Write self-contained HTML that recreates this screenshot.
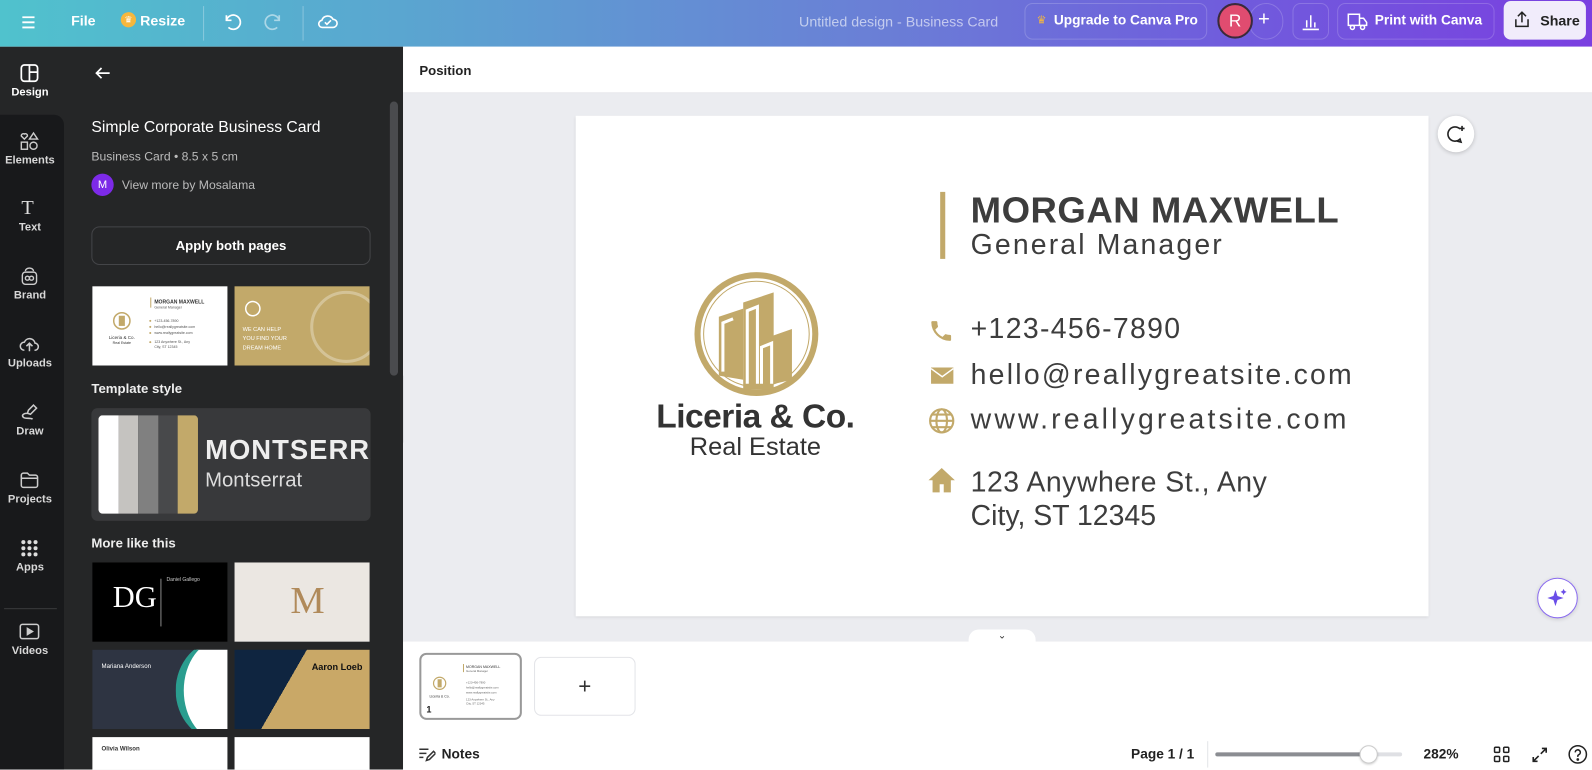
<!DOCTYPE html>
<html><head><meta charset="utf-8"><style>
*{box-sizing:border-box;margin:0;padding:0}
html,body{width:1592px;height:770px;overflow:hidden;background:#fff;font-family:"Liberation Sans",sans-serif}
#w{position:absolute;left:0;top:0;width:1568px;height:758px;transform:scale(1.01531);transform-origin:0 0;overflow:hidden}
.a{position:absolute}
.top{left:0;top:0;width:1568px;height:46px;background:linear-gradient(90deg,#50c2cd 0%,#5aa6d0 25%,#6a7fd6 55%,#6f5fdc 75%,#7a3fe0 100%)}
.tw{color:#fff;font-size:14px;font-weight:bold}
.rl{color:#d8d8d8;font-size:11px;width:63px;text-align:center;font-weight:bold}
.wt{color:#fff}
.ct{color:#3d3d3d;font-size:28px;letter-spacing:0.5px;white-space:nowrap}
.btn{border:1px solid rgba(255,255,255,.18);border-radius:8px}
</style></head><body><div id="w">
<div class="a top"></div>
<svg class="a" style="left:19px;top:13px" width="18" height="18" viewBox="0 0 18 18" stroke="#fff" stroke-width="1.8"><path d="M3 4h12M3 9h12M3 14h12"/></svg>
<div class="a tw" style="left:70px;top:12px">File</div>
<div class="a" style="left:119px;top:12px;width:15px;height:15px;border-radius:50%;background:#f6b73c;color:#fff;font-size:9px;text-align:center;line-height:15px">♛</div>
<div class="a tw" style="left:138px;top:12px">Resize</div>
<div class="a" style="left:200px;top:6px;width:1px;height:34px;background:rgba(255,255,255,.3)"></div>
<svg class="a" style="left:217px;top:10px" width="22" height="22" viewBox="0 0 22 22" fill="none" stroke="#fff" stroke-width="1.7"><path d="M6 5v5h5M6 10a7 7 0 1 1 2 7"/></svg>
<svg class="a" style="left:259px;top:10px" width="22" height="22" viewBox="0 0 22 22" fill="none" stroke="rgba(255,255,255,.5)" stroke-width="1.7"><path d="M16 5v5h-5M16 10a7 7 0 1 0-2 7"/></svg>
<div class="a" style="left:298px;top:6px;width:1px;height:34px;background:rgba(255,255,255,.3)"></div>
<svg class="a" style="left:311px;top:9px" width="24" height="24" viewBox="0 0 24 24" fill="none" stroke="#fff" stroke-width="1.6"><path d="M7 18h10a4 4 0 0 0 0-8 6 6 0 0 0-11 1 3.5 3.5 0 0 0 1 7z"/><path d="M9 13l2 2 4-4"/></svg>
<div class="a" style="left:787px;top:13px;color:rgba(255,255,255,.6);font-size:14px">Untitled design - Business Card</div>
<div class="a btn" style="left:1009px;top:3px;width:180px;height:36px"></div>
<div class="a" style="left:1021px;top:13px;color:#f6b73c;font-size:11px">♛</div>
<div class="a tw" style="left:1038px;top:12px;font-size:13.5px">Upgrade to Canva Pro</div>
<div class="a btn" style="left:1230px;top:3px;width:34px;height:36px;border-radius:18px"></div>
<div class="a" style="left:1199px;top:3px;width:35px;height:35px;border-radius:50%;background:#e04c70;border:2px solid #3a2a3a;color:#fff;font-size:17px;text-align:center;line-height:31px">R</div>
<div class="a wt" style="left:1239px;top:8px;font-size:20px">+</div>
<div class="a btn" style="left:1273px;top:3px;width:36px;height:36px"></div>
<svg class="a" style="left:1281px;top:11px" width="20" height="20" viewBox="0 0 20 20" stroke="#fff" stroke-width="1.5"><path d="M2 18h16M6 16V9M10 16V4M14 16V11"/></svg>
<div class="a btn" style="left:1317px;top:3px;width:155px;height:36px"></div>
<svg class="a" style="left:1326px;top:11px" width="22" height="20" viewBox="0 0 22 20" fill="none" stroke="#fff" stroke-width="1.5"><path d="M2 3h11v11H2zM13 7h4l3 4v3h-7"/><circle cx="6" cy="16" r="2"/><circle cx="16" cy="16" r="2"/></svg>
<div class="a tw" style="left:1354px;top:12px;font-size:13.5px">Print with Canva</div>
<div class="a" style="left:1481px;top:1px;width:81px;height:38px;background:#f1ecfb;border-radius:7px"></div>
<svg class="a" style="left:1489px;top:9px" width="20" height="20" viewBox="0 0 20 20" fill="none" stroke="#222" stroke-width="1.5"><path d="M10 13V3M6 7l4-4 4 4M4 10v7h12v-7"/></svg>
<div class="a" style="left:1517px;top:12px;font-size:14px;font-weight:bold;color:#222">Share</div>

<div class="a" style="left:0;top:46px;width:397px;height:712px;background:#252627"></div>
<div class="a" style="left:0;top:113px;width:63px;height:645px;background:#18191b;border-top-right-radius:10px"></div>
<svg class="a" style="left:19px;top:62px" width="20" height="20" viewBox="0 0 20 20" fill="none" stroke="#fff" stroke-width="1.7"><rect x="2" y="2" width="16" height="16" rx="3"/><path d="M10 2v16M10 9h8"/></svg>
<div class="a rl" style="left:-2px;top:85px;color:#fff">Design</div>
<svg class="a" style="left:19px;top:129px" width="20" height="20" viewBox="0 0 20 20" fill="none" stroke="#ccc" stroke-width="1.4"><path d="M5 8l-3-3a2 2 0 0 1 3-2 2 2 0 0 1 3 2zM14 2l4 6h-8z"/><rect x="2" y="11" width="6" height="7"/><circle cx="14" cy="14.5" r="3.5"/></svg>
<div class="a rl" style="left:-2px;top:152px">Elements</div>
<div class="a" style="left:21px;top:194px;color:#ddd;font-size:20px;font-family:'Liberation Serif',serif">T</div>
<div class="a rl" style="left:-2px;top:218px">Text</div>
<svg class="a" style="left:19px;top:262px" width="20" height="20" viewBox="0 0 20 20" fill="none" stroke="#ccc" stroke-width="1.4"><rect x="3" y="6" width="14" height="12" rx="3"/><circle cx="8" cy="12" r="2"/><circle cx="12" cy="12" r="2"/><path d="M6 5a4 3 0 0 1 8 0"/></svg>
<div class="a rl" style="left:-2px;top:285px">Brand</div>
<svg class="a" style="left:18px;top:329px" width="22" height="20" viewBox="0 0 22 20" fill="none" stroke="#ccc" stroke-width="1.5"><path d="M6 16a4 4 0 0 1 0-8 5.5 5.5 0 0 1 10.5 1A3.5 3.5 0 0 1 16 16M11 17V10M8 12l3-3 3 3"/></svg>
<div class="a rl" style="left:-2px;top:352px">Uploads</div>
<svg class="a" style="left:19px;top:396px" width="20" height="20" viewBox="0 0 20 20" fill="none" stroke="#ccc" stroke-width="1.5"><path d="M14 3l3 3-6 6-3-1 1-3zM8 11c-4 0-6 2-4 4s8 0 9 2"/></svg>
<div class="a rl" style="left:-2px;top:419px">Draw</div>
<svg class="a" style="left:19px;top:463px" width="20" height="20" viewBox="0 0 20 20" fill="none" stroke="#ccc" stroke-width="1.5"><path d="M2 5a2 2 0 0 1 2-2h4l2 2h6a2 2 0 0 1 2 2v8a2 2 0 0 1-2 2H4a2 2 0 0 1-2-2zM2 8h16"/></svg>
<div class="a rl" style="left:-2px;top:486px">Projects</div>
<svg class="a" style="left:20px;top:531px" width="18" height="18" viewBox="0 0 18 18" fill="#ddd"><circle cx="3" cy="3" r="2"/><circle cx="9" cy="3" r="2"/><circle cx="15" cy="3" r="2"/><circle cx="3" cy="9" r="2"/><circle cx="9" cy="9" r="2"/><circle cx="15" cy="9" r="2"/><circle cx="3" cy="15" r="2"/><circle cx="9" cy="15" r="2"/><circle cx="15" cy="15" r="2"/></svg>
<div class="a rl" style="left:-2px;top:553px">Apps</div>
<div class="a" style="left:4px;top:599px;width:52px;height:1px;background:#3a3b3d"></div>
<svg class="a" style="left:19px;top:613px" width="20" height="18" viewBox="0 0 20 18" fill="none" stroke="#ccc" stroke-width="1.5"><rect x="1" y="2" width="18" height="14" rx="2"/><path d="M8 6v6l5-3z" fill="#ccc"/></svg>
<div class="a rl" style="left:-2px;top:635px">Videos</div>

<svg class="a" style="left:92px;top:63px" width="18" height="18" viewBox="0 0 18 18" fill="none" stroke="#fff" stroke-width="1.7"><path d="M16 9H3M8 4L3 9l5 5"/></svg>
<div class="a" style="left:90px;top:117px;color:#fff;font-size:15.5px">Simple Corporate Business Card</div>
<div class="a" style="left:90px;top:147px;color:#bbb;font-size:12px">Business Card • 8.5 x 5 cm</div>
<div class="a" style="left:90px;top:171px;width:22px;height:22px;border-radius:50%;background:#7d2ae8;color:#fff;font-size:11px;text-align:center;line-height:22px">M</div>
<div class="a" style="left:120px;top:175px;color:#bbb;font-size:12px">View more by Mosalama</div>
<div class="a" style="left:90px;top:223px;width:275px;height:38px;border:1px solid #444548;border-radius:8px;color:#fff;font-size:13px;font-weight:bold;text-align:center;line-height:36px">Apply both pages</div>
<div class="a" style="left:384px;top:100px;width:8px;height:270px;background:#4a4b4e;border-radius:4px"></div>

<div class="a" style="left:91px;top:282px;width:133px;height:78px;background:#fff">
 <svg width="133" height="78" viewBox="0 0 133 78"><circle cx="29" cy="34" r="8" fill="none" stroke="#c2a96a" stroke-width="1.5"/><rect x="26" y="29" width="6" height="10" fill="#c2a96a"/><text x="29" y="52" font-size="4.5" text-anchor="middle" fill="#333" font-family="Liberation Sans">Liceria &amp; Co.</text><text x="29" y="57" font-size="3.5" text-anchor="middle" fill="#333" font-family="Liberation Sans">Real Estate</text><rect x="57" y="11" width="1" height="10" fill="#c2a96a"/><text x="61" y="17" font-size="5" font-weight="bold" fill="#333" font-family="Liberation Sans">MORGAN MAXWELL</text><text x="61" y="22" font-size="3.5" fill="#555" font-family="Liberation Sans">General Manager</text><g font-size="3.5" fill="#555" font-family="Liberation Sans"><text x="61" y="35">+123-456-7890</text><text x="61" y="41">hello@reallygreatsite.com</text><text x="61" y="47">www.reallygreatsite.com</text><text x="61" y="56">123 Anywhere St., Any</text><text x="61" y="61">City, ST 12345</text></g><g fill="#c2a96a"><circle cx="57" cy="34" r="1"/><circle cx="57" cy="40" r="1"/><circle cx="57" cy="46" r="1"/><circle cx="57" cy="55" r="1"/></g></svg>
</div>
<div class="a" style="left:231px;top:282px;width:133px;height:78px;background:#c2a96a">
 <svg width="133" height="78" viewBox="0 0 133 78"><circle cx="18" cy="22" r="7" fill="none" stroke="#fff" stroke-width="1.5"/><circle cx="110" cy="40" r="34" fill="none" stroke="rgba(255,255,255,.3)" stroke-width="3"/><g font-size="5.5" fill="#fff" font-family="Liberation Sans"><text x="8" y="44">WE CAN HELP</text><text x="8" y="53">YOU FIND YOUR</text><text x="8" y="62">DREAM HOME</text></g></svg>
</div>
<div class="a" style="left:90px;top:375px;color:#eee;font-size:13px;font-weight:bold">Template style</div>
<div class="a" style="left:90px;top:402px;width:275px;height:111px;background:#38393b;border-radius:6px;overflow:hidden">
 <div class="a" style="left:7px;top:7px;width:98px;height:97px;border-radius:4px;overflow:hidden;display:flex"><div style="flex:1;background:#fff"></div><div style="flex:1;background:#c5c3c0"></div><div style="flex:1;background:#808080"></div><div style="flex:1;background:#48494b"></div><div style="flex:1;background:#c2a96a"></div></div>
 <div class="a" style="left:112px;top:26px;color:#eee;font-size:27px;white-space:nowrap;letter-spacing:1px;font-weight:bold">MONTSERRAT</div>
 <div class="a" style="left:112px;top:60px;color:#ddd;font-size:20px">Montserrat</div>
</div>
<div class="a" style="left:90px;top:527px;color:#eee;font-size:13px;font-weight:bold">More like this</div>
<div class="a" style="left:91px;top:554px;width:133px;height:78px;background:#000"><div class="a" style="left:20px;top:18px;color:#fff;font-family:'Liberation Serif',serif;font-size:30px">DG</div><div class="a" style="left:67px;top:16px;width:1px;height:47px;background:#888"></div><div class="a" style="left:73px;top:14px;color:#ccc;font-size:5px">Daniel Gallego</div></div>
<div class="a" style="left:231px;top:554px;width:133px;height:78px;background:#ebe7e2"><div class="a" style="left:55px;top:16px;color:#b08a5a;font-family:'Liberation Serif',serif;font-size:38px">M</div></div>
<div class="a" style="left:91px;top:640px;width:133px;height:78px;background:#2e3442;overflow:hidden"><div class="a" style="left:82px;top:-10px;width:90px;height:100px;border-radius:50%;background:#fff;border-left:8px solid #2a9d8f"></div><div class="a" style="left:9px;top:14px;color:#fff;font-size:6px">Mariana Anderson</div></div>
<div class="a" style="left:231px;top:640px;width:133px;height:78px;background:linear-gradient(120deg,#0f2540 40%,#c9a867 40%)"><div class="a" style="left:76px;top:12px;color:#111;font-size:9px;font-weight:bold">Aaron Loeb</div></div>
<div class="a" style="left:91px;top:726px;width:133px;height:40px;background:#fff"><div class="a" style="left:9px;top:9px;color:#333;font-size:6px;font-weight:bold">Olivia Wilson</div></div>
<div class="a" style="left:231px;top:726px;width:133px;height:40px;background:#fff"></div>
<div class="a" style="left:397px;top:370px;width:13px;height:66px;background:#252627;border-radius:0 8px 8px 0;color:#aaa;font-size:10px;line-height:66px;text-align:center">‹</div>

<div class="a" style="left:397px;top:46px;width:1171px;height:46px;background:#fff;border-bottom:1px solid #e3e4e8"></div>
<div class="a" style="left:413px;top:62px;font-size:13px;font-weight:bold;color:#222">Position</div>
<div class="a" style="left:397px;top:92px;width:1171px;height:540px;background:#ebecf0"></div>
<div class="a" style="left:567px;top:114px;width:840px;height:493px;background:#fff;box-shadow:0 1px 3px rgba(0,0,0,.1)"></div>
<div class="a" style="left:1416px;top:114px;width:36px;height:36px;border-radius:50%;background:#fff;box-shadow:0 1px 4px rgba(0,0,0,.2)"></div>
<svg class="a" style="left:1424px;top:122px" width="20" height="20" viewBox="0 0 20 20" fill="none" stroke="#222" stroke-width="1.6"><path d="M14 5a7 7 0 1 0 0 10l1 3-4-1"/><path d="M16 2v5M13.5 4.5h5"/></svg>
<div class="a" style="left:1514px;top:569px;width:40px;height:40px;border-radius:50%;background:#fff;border:1.5px solid #8b6cf0;box-shadow:0 1px 4px rgba(0,0,0,.15)"></div>
<svg class="a" style="left:1523px;top:578px" width="22" height="22" viewBox="0 0 22 22" fill="#6a4ee8"><path d="M9 3l2 6 6 2-6 2-2 6-2-6-6-2 6-2zM17 2l1 2 2 1-2 1-1 2-1-2-2-1 2-1z"/></svg>

<svg class="a" style="left:682px;top:266px" width="126" height="126" viewBox="0 0 126 126"><circle cx="63" cy="63" r="58" fill="none" stroke="#c2a96a" stroke-width="6"/><circle cx="63" cy="63" r="52" fill="none" stroke="#c2a96a" stroke-width="1"/>
<path d="M50 118V32l30-10v96z" fill="#c2a96a"/><path d="M26 104V46l24-8v70z" fill="#c2a96a"/><path d="M64 116V70l34-12v50z" fill="#c2a96a"/>
<path d="M54 112V40l10-4v76M30 100V52l10-4M68 112V76l10-4v40" stroke="#fff" stroke-width="3" fill="none"/></svg>
<div class="a" style="left:620px;top:391px;width:248px;text-align:center;color:#333;font-size:33px;font-weight:bold;letter-spacing:-0.5px">Liceria &amp; Co.</div>
<div class="a" style="left:620px;top:426px;width:248px;text-align:center;color:#333;font-size:25px">Real Estate</div>
<div class="a" style="left:926px;top:189px;width:5px;height:66px;background:#c2a96a"></div>
<div class="a" style="left:956px;top:186px;color:#3d3d3d;font-size:36px;font-weight:bold;letter-spacing:0.5px;white-space:nowrap">MORGAN MAXWELL</div>
<div class="a" style="left:956px;top:225px;color:#3d3d3d;font-size:28px;letter-spacing:2.1px;white-space:nowrap">General Manager</div>
<svg class="a" style="left:914px;top:313px" width="26" height="26" viewBox="0 0 24 24" fill="#c2a96a"><path d="M6.6 10.8a15 15 0 0 0 6.6 6.6l2.2-2.2a1 1 0 0 1 1-.25 11.4 11.4 0 0 0 3.6.57 1 1 0 0 1 1 1V20a1 1 0 0 1-1 1A17 17 0 0 1 3 4a1 1 0 0 1 1-1h3.5a1 1 0 0 1 1 1c0 1.25.2 2.450.57 3.57a1 1 0 0 1-.25 1z"/></svg>
<div class="a ct" style="left:956px;top:308px;letter-spacing:1.3px">+123-456-7890</div>
<svg class="a" style="left:916px;top:361px" width="24" height="18" viewBox="0 0 24 18" fill="#c2a96a"><path d="M1 1h22v16H1z"/><path d="M1 2l11 8 11-8" stroke="#fff" stroke-width="1.5" fill="none"/></svg>
<div class="a ct" style="left:956px;top:353px;letter-spacing:2.2px">hello@reallygreatsite.com</div>
<svg class="a" style="left:914px;top:401px" width="27" height="27" viewBox="0 0 26 26" fill="none" stroke="#c2a96a" stroke-width="2"><circle cx="13" cy="13" r="11"/><ellipse cx="13" cy="13" rx="5" ry="11"/><path d="M2 13h22M4 7h18M4 19h18"/></svg>
<div class="a ct" style="left:956px;top:397px;letter-spacing:3.1px">www.reallygreatsite.com</div>
<svg class="a" style="left:913px;top:460px" width="29" height="26" viewBox="0 0 28 26" fill="#c2a96a"><path d="M14 1L1 13h4v12h7v-8h4v8h7V13h4z"/></svg>
<div class="a ct" style="left:956px;top:459px">123 Anywhere St., Any</div>
<div class="a ct" style="left:956px;top:492px;letter-spacing:0">City, ST 12345</div>

<div class="a" style="left:397px;top:632px;width:1171px;height:126px;background:#fff"></div>
<div class="a" style="left:954px;top:620px;width:66px;height:13px;background:#fff;border-radius:10px 10px 0 0;color:#333;font-size:10px;text-align:center;line-height:14px">⌄</div>
<div class="a" style="left:413px;top:643px;width:101px;height:66px;border:2px solid #999;border-radius:7px;background:#fff;overflow:hidden">
 <svg width="97" height="62" viewBox="0 0 97 62"><circle cx="18" cy="28" r="6" fill="none" stroke="#c2a96a" stroke-width="1.2"/><rect x="16" y="24" width="4" height="8" fill="#c2a96a"/><text x="18" y="42" font-size="3.5" text-anchor="middle" fill="#333" font-family="Liberation Sans">Liceria &amp; Co.</text><rect x="41" y="9" width="1" height="8" fill="#c2a96a"/><text x="44" y="13" font-size="3.5" fill="#333" font-family="Liberation Sans">MORGAN MAXWELL</text><g font-size="2.8" fill="#666" font-family="Liberation Sans"><text x="44" y="17">General Manager</text><text x="44" y="28">+123-456-7890</text><text x="44" y="33">hello@reallygreatsite.com</text><text x="44" y="38">www.reallygreatsite.com</text><text x="44" y="45">123 Anywhere St., Any</text><text x="44" y="49">City, ST 12345</text></g><text x="5" y="57" font-size="9" font-weight="bold" fill="#222" font-family="Liberation Sans">1</text></svg>
</div>
<div class="a" style="left:526px;top:647px;width:100px;height:58px;border:1px solid #e3e4e8;border-radius:7px;text-align:center;line-height:56px;font-size:22px;color:#333">+</div>
<svg class="a" style="left:411px;top:734px" width="18" height="18" viewBox="0 0 18 18" fill="none" stroke="#333" stroke-width="1.5"><path d="M2 4h9M2 8h7M2 12h4M9 15l1-3 6-6 2 2-6 6z"/></svg>
<div class="a" style="left:435px;top:735px;font-size:13.5px;font-weight:bold;color:#222">Notes</div>
<div class="a" style="left:1114px;top:735px;font-size:13.5px;font-weight:bold;color:#222">Page 1 / 1</div>
<div class="a" style="left:1189px;top:730px;width:1px;height:26px;background:#e3e4e8"></div>
<div class="a" style="left:1197px;top:741px;width:184px;height:4px;border-radius:2px;background:#dfe0e4"></div>
<div class="a" style="left:1197px;top:741px;width:151px;height:4px;border-radius:2px;background:#8b8d92"></div>
<div class="a" style="left:1339px;top:734px;width:18px;height:18px;border-radius:50%;background:#fff;border:1px solid #ccc;box-shadow:0 1px 2px rgba(0,0,0,.2)"></div>
<div class="a" style="left:1402px;top:735px;font-size:13.5px;font-weight:bold;color:#222">282%</div>
<svg class="a" style="left:1471px;top:735px" width="16" height="16" viewBox="0 0 16 16" fill="none" stroke="#222" stroke-width="1.5"><rect x="1" y="1" width="5" height="5" rx="1"/><rect x="10" y="1" width="5" height="5" rx="1"/><rect x="1" y="10" width="5" height="5" rx="1"/><rect x="10" y="10" width="5" height="5" rx="1"/></svg>
<svg class="a" style="left:1508px;top:735px" width="17" height="17" viewBox="0 0 16 16" fill="none" stroke="#222" stroke-width="1.5"><path d="M10 2h4v4M14 2l-5 5M6 14H2v-4M2 14l5-5"/></svg>
<svg class="a" style="left:1544px;top:733px" width="20" height="20" viewBox="0 0 20 20" fill="none" stroke="#222" stroke-width="1.5"><circle cx="10" cy="10" r="8.5"/><path d="M7.5 8a2.5 2.5 0 1 1 3.5 2.3c-.7.3-1 .8-1 1.5v.7"/><circle cx="10" cy="15" r=".6" fill="#222"/></svg>
</div></body></html>
